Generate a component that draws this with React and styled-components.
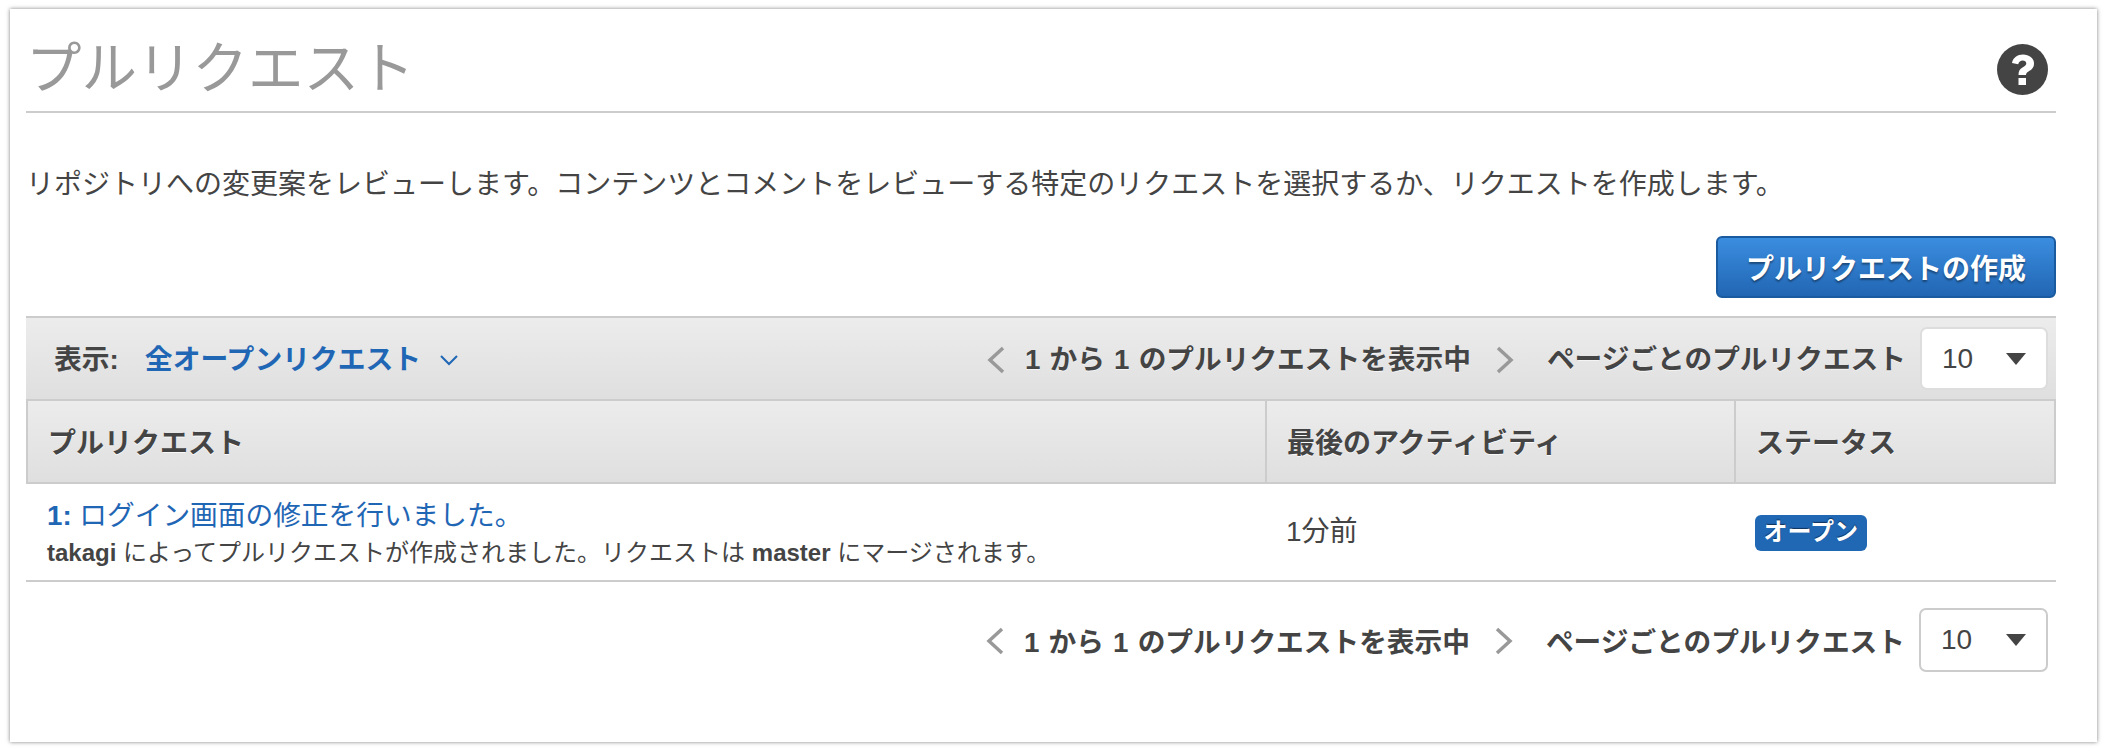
import React from 'react';
import styled, { createGlobalStyle } from 'styled-components';

const Global = createGlobalStyle`
  html, body { margin: 0; padding: 0; background: #fff; }
  body { min-height: 752px; font-family: "Liberation Sans", "Noto Sans CJK JP", sans-serif; color: #444; }
  #root { padding-top: 9px; height: 752px; box-sizing: border-box; }
`;
const Card = styled.div`
  box-sizing: border-box;
  width: 2087px; height: 733px;
  margin: 0 0 0 10px;
  padding: 0 41px 0 16px;
  background: #fff;
  box-shadow: 0 0 4px rgba(0,0,0,.5);
`;
const Header = styled.header`
  display: flex; align-items: center; justify-content: space-between;
  height: 104px; box-sizing: border-box;
  border-bottom: 2px solid #ccc;
  padding: 0 8px 0 0;
`;
const Title = styled.h1`
  margin: 10px 0 0; font-size: 55.5px; font-weight: 400; color: #999; line-height: 1;
  font-family: "Noto Sans CJK JP", sans-serif;
`;
const HelpIcon = styled.svg`
  width: 51px; height: 51px; margin-top: 18px;
`;
const Description = styled.p`
  margin: 53px 0 0; font-size: 28px; line-height: 38px; color: #444;
`;
const Actions = styled.div`
  display: flex; justify-content: flex-end; margin-top: 32px;
`;
const PrimaryButton = styled.button`
  width: 340px; height: 62px; box-sizing: border-box;
  border: 2px solid #1a5a9e; border-radius: 6px;
  background: linear-gradient(#3b8de0, #2166b3);
  color: #fff; font: bold 28px "Liberation Sans", "Noto Sans CJK JP", sans-serif;
  text-shadow: 0 2px 2px rgba(0,0,0,.4);
`;
const Toolbar = styled.div`
  display: flex; align-items: center; justify-content: space-between;
  height: 83px; box-sizing: border-box; margin-top: 18px;
  border-top: 2px solid #ccc;
  padding: 0 8px 0 28px;
  background: linear-gradient(#ececec, #dfdfdf);
`;
const Filter = styled.div`
  display: flex; align-items: center; font-size: 27.8px; font-weight: bold; padding-bottom: 4px;
`;
const FilterLink = styled.span`
  color: #1f66b5; margin-left: 26px;
`;
const Chevron = styled.svg`
  width: 20px; height: 12px; margin-left: 18px; margin-top: 6px;
  fill: none; stroke: #1f66b5; stroke-width: 2;
`;
const Pager = styled.div`
  display: flex; align-items: center; font-size: 27.7px; font-weight: bold;
  text-shadow: 0 1px 0 rgba(255,255,255,.6);
`;
const PagerText = styled.span`
  padding-bottom: ${p => p.$raised ? '4px' : '0'};
  word-spacing: ${p => p.$spaced ? '1.5px' : '0'};
`;
const PageArrow = styled.svg`
  width: 20px; height: 28px; fill: none; stroke: #999; stroke-width: 3.5;
  margin: ${p => p.$next ? '2px 32px 0 24px' : '2px 19px 0 0'};
`;
const Select = styled.div`
  display: flex; align-items: center; justify-content: space-between;
  width: ${p => p.$tall ? '129px' : '128px'}; height: ${p => p.$tall ? '64px' : '63px'}; box-sizing: border-box;
  margin-left: 14px; padding: 0 20px;
  background: #fff; border: 2px solid ${p => p.$tall ? '#ccc' : '#ddd'}; border-radius: 7px;
  font-size: 28px; font-weight: normal; color: #444; text-shadow: none;
`;
const Caret = styled.svg`
  width: 20px; height: 12px; fill: #444;
`;
const Table = styled.div`
  display: grid; grid-template-columns: 1239px 469px 322px;
`;
const HeadCell = styled.div`
  display: flex; align-items: center; height: 85px; box-sizing: border-box;
  border: 2px solid #ccc; border-right-width: ${p => p.$last ? '2px' : '0'};
  padding: 0 0 2px 20px;
  background: linear-gradient(#ececec, #dfdfdf);
  font-size: 28px; font-weight: bold; text-shadow: 0 1px 0 rgba(255,255,255,.8);
`;
const Cell = styled.div`
  display: flex; flex-direction: column; justify-content: center;
  height: 98px; box-sizing: border-box; border-bottom: 2px solid #ccc;
  padding-left: 21px;
  padding-top: ${p => p.$lowered ? '3px' : '0'};
  padding-bottom: ${p => p.$raised ? '6px' : '0'};
  font-size: 28px;
`;
const PrLink = styled.div`
  color: #1f66b5; font-size: 27.7px; line-height: 38px;
`;
const PrMeta = styled.div`
  font-size: 24px; line-height: 36px; color: #444;
`;
const Badge = styled.span`
  align-self: flex-start;
  margin-top: 2px; padding: 0 8.5px; height: 36px; line-height: 34px;
  background: #2067b4; border-radius: 6px; color: #fff;
  font-size: 24px; font-weight: bold;
  text-shadow: 0 -1px 1px rgba(0,0,0,.5);
`;
const BottomPager = styled.div`
  display: flex; justify-content: flex-end; padding-right: 8px; margin-top: 26px;
`;

const Help = () => (
  <HelpIcon viewBox="0 0 51 51" role="img" aria-label="help">
    <circle cx="25.5" cy="25.5" r="25.5" fill="#444" />
    <path d="M15 19c1-5.5 5.500-8.500 11-8.500 6 0 11 3.500 11 9 0 4.500-2.700 6.300-5.500 8-2 1.200-2.500 2-2.500 3.500h-7.500c0-4 1.300-6 4-7.500 2.500-1.400 3.800-2.400 3.800-4 0-1.800-1.600-2.900-3.600-2.900-2.300 0-3.700 1.200-4.500 3.600z" fill="#fff" />
    <rect x="21.500" y="34" width="7.500" height="7" fill="#fff" />
  </HelpIcon>
);

const Pagination = ({ tall }) => (
  <Pager>
    <PageArrow viewBox="0 0 20 28"><path d="M17 2 4 14l13 12" /></PageArrow>
    <PagerText $raised={!tall} $spaced>1 から 1 のプルリクエストを表示中</PagerText>
    <PageArrow $next viewBox="0 0 20 28"><path d="M3 2l13 12L3 26" /></PageArrow>
    <PagerText $raised={!tall}>ページごとのプルリクエスト</PagerText>
    <Select $tall={tall}>
      <span>10</span>
      <Caret viewBox="0 0 20 12"><path d="M0 0h20L10 12z" /></Caret>
    </Select>
  </Pager>
);

export default function App() {
  return (
    <>
      <Global />
      <Card>
        <Header>
          <Title>プルリクエスト</Title>
          <Help />
        </Header>
        <Description>リポジトリへの変更案をレビューします。コンテンツとコメントをレビューする特定のリクエストを選択するか、リクエストを作成します。</Description>
        <Actions>
          <PrimaryButton>プルリクエストの作成</PrimaryButton>
        </Actions>
        <Toolbar>
          <Filter>
            <span>表示:</span>
            <FilterLink>全オープンリクエスト</FilterLink>
            <Chevron viewBox="0 0 20 12"><path d="M2 2l8 8 8-8" /></Chevron>
          </Filter>
          <Pagination />
        </Toolbar>
        <Table>
          <HeadCell $first>プルリクエスト</HeadCell>
          <HeadCell>最後のアクティビティ</HeadCell>
          <HeadCell $last>ステータス</HeadCell>
          <Cell $lowered>
            <PrLink><b>1:</b> ログイン画面の修正を行いました。</PrLink>
            <PrMeta><b>takagi</b> によってプルリクエストが作成されました。リクエストは <b>master</b> にマージされます。</PrMeta>
          </Cell>
          <Cell $raised>1分前</Cell>
          <Cell><Badge>オープン</Badge></Cell>
        </Table>
        <BottomPager><Pagination tall /></BottomPager>
      </Card>
    </>
  );
}
